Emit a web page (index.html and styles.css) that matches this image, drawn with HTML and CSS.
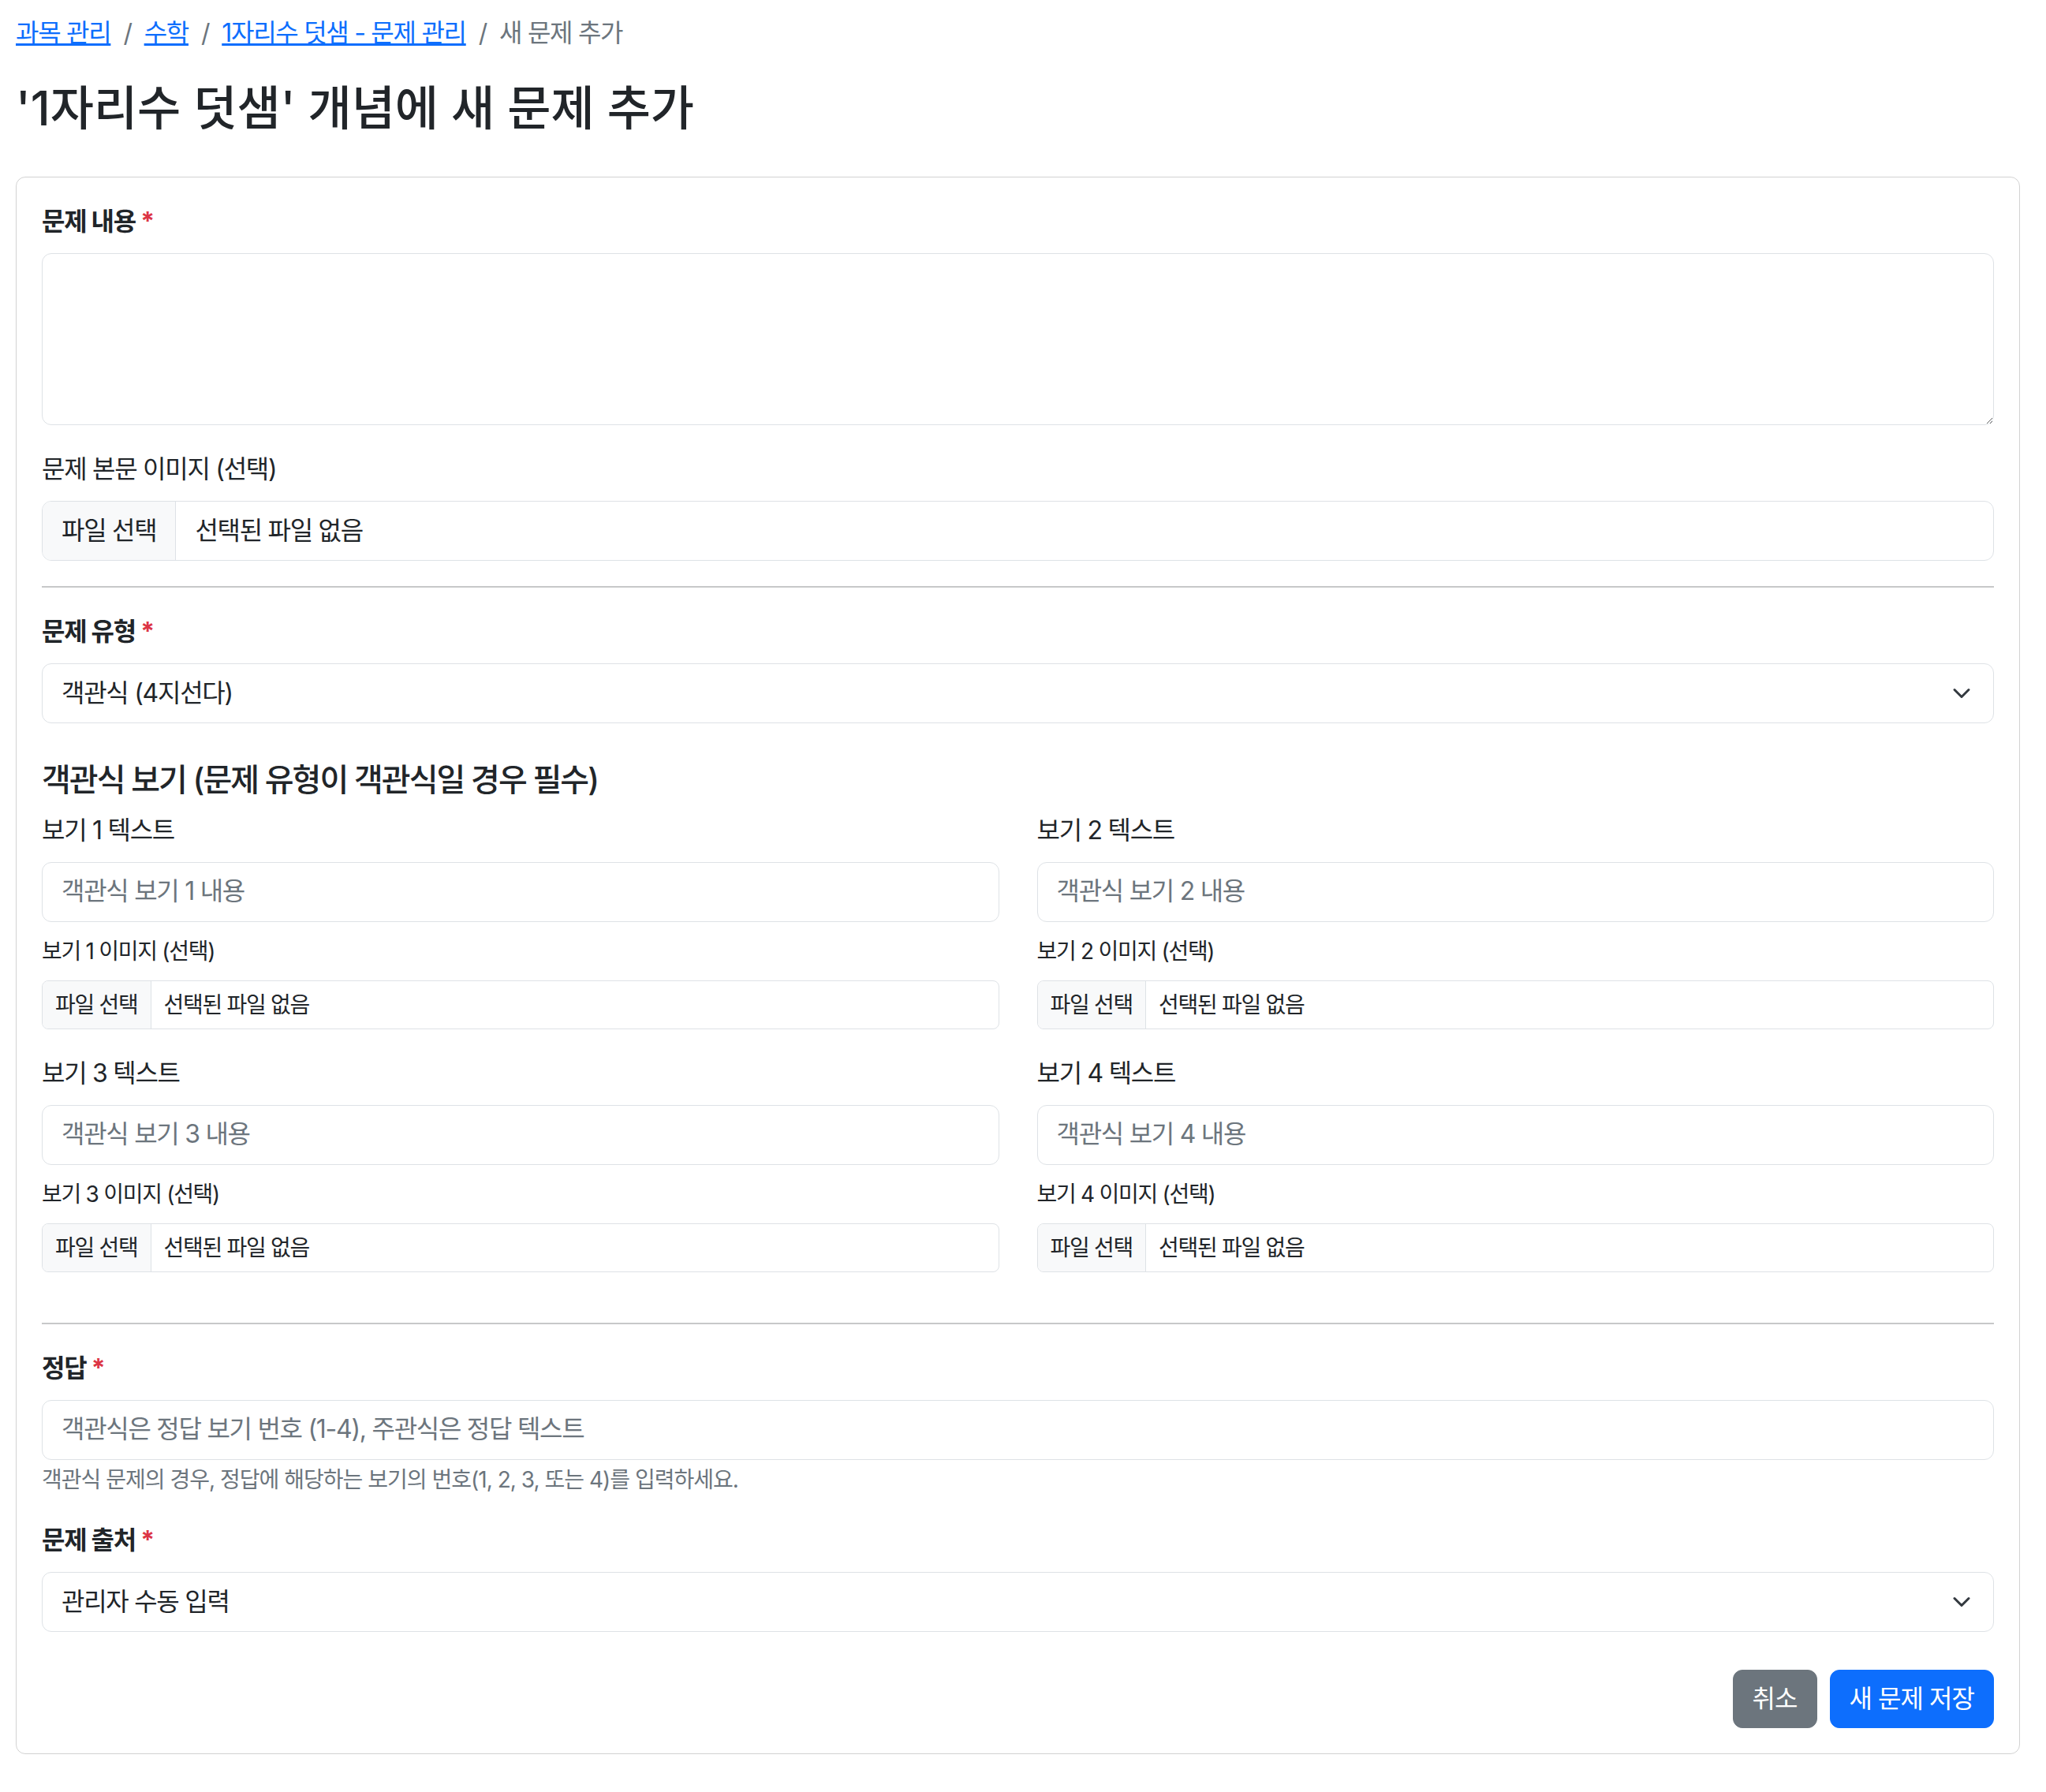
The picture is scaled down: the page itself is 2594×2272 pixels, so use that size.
FILE: index.html
```html
<!DOCTYPE html>
<html lang="ko">
<head>
<meta charset="utf-8">
<title>새 문제 추가</title>
<link rel="stylesheet" href="styles.css">
</head>
<body>
<main class="page">
  <nav class="crumbs" aria-label="breadcrumb">
    <ol class="crumb-list">
      <li class="crumb"><a href="#">과목 관리</a></li>
      <li class="crumb"><a href="#">수학</a></li>
      <li class="crumb"><a href="#">1자리수 덧샘 - 문제 관리</a></li>
      <li class="crumb active">새 문제 추가</li>
    </ol>
  </nav>

  <h1 class="title">'1자리수 덧샘' 개념에 새 문제 추가</h1>

  <form class="card">
    <div class="field">
      <label class="label strong">문제 내용 <span class="req">*</span></label>
      <textarea class="control area"></textarea>
    </div>

    <div class="field">
      <label class="label">문제 본문 이미지 (선택)</label>
      <div class="file"><span class="file-btn">파일 선택</span><span class="file-name">선택된 파일 없음</span></div>
    </div>

    <hr class="rule">

    <div class="field">
      <label class="label strong">문제 유형 <span class="req">*</span></label>
      <div class="control select"><span>객관식 (4지선다)</span><svg class="caret" viewBox="0 0 16 16" width="32" height="32"><path d="m2 5 6 6 6-6" fill="none" stroke="#343a40" stroke-width="2" stroke-linecap="round" stroke-linejoin="round"/></svg></div>
    </div>

    <h2 class="section">객관식 보기 (문제 유형이 객관식일 경우 필수)</h2>

    <div class="options">
      <div class="option">
        <label class="label">보기 1 텍스트</label>
        <div class="control input placeholder">객관식 보기 1 내용</div>
        <label class="label small">보기 1 이미지 (선택)</label>
        <div class="file sm"><span class="file-btn">파일 선택</span><span class="file-name">선택된 파일 없음</span></div>
      </div>
      <div class="option">
        <label class="label">보기 2 텍스트</label>
        <div class="control input placeholder">객관식 보기 2 내용</div>
        <label class="label small">보기 2 이미지 (선택)</label>
        <div class="file sm"><span class="file-btn">파일 선택</span><span class="file-name">선택된 파일 없음</span></div>
      </div>
      <div class="option">
        <label class="label">보기 3 텍스트</label>
        <div class="control input placeholder">객관식 보기 3 내용</div>
        <label class="label small">보기 3 이미지 (선택)</label>
        <div class="file sm"><span class="file-btn">파일 선택</span><span class="file-name">선택된 파일 없음</span></div>
      </div>
      <div class="option">
        <label class="label">보기 4 텍스트</label>
        <div class="control input placeholder">객관식 보기 4 내용</div>
        <label class="label small">보기 4 이미지 (선택)</label>
        <div class="file sm"><span class="file-btn">파일 선택</span><span class="file-name">선택된 파일 없음</span></div>
      </div>
    </div>

    <hr class="rule">

    <div class="field">
      <label class="label strong">정답 <span class="req">*</span></label>
      <div class="control input placeholder">객관식은 정답 보기 번호 (1-4), 주관식은 정답 텍스트</div>
      <div class="help">객관식 문제의 경우, 정답에 해당하는 보기의 번호(1, 2, 3, 또는 4)를 입력하세요.</div>
    </div>

    <div class="field">
      <label class="label strong">문제 출처 <span class="req">*</span></label>
      <div class="control select"><span>관리자 수동 입력</span><svg class="caret" viewBox="0 0 16 16" width="32" height="32"><path d="m2 5 6 6 6-6" fill="none" stroke="#343a40" stroke-width="2" stroke-linecap="round" stroke-linejoin="round"/></svg></div>
    </div>

    <div class="actions">
      <button type="button" class="btn btn-gray">취소</button>
      <button type="button" class="btn btn-blue">새 문제 저장</button>
    </div>
  </form>
</main>
</body>
</html>
```

FILE: styles.css
```css
:root {
  font-size: 32px;
}

* {
  box-sizing: border-box;
}

body {
  margin: 0;
  background: #fff;
  color: #212529;
  font-family: Inter, "Noto Sans CJK KR", sans-serif;
  font-size: 1rem;
  line-height: 1.5;
  letter-spacing: -0.04em;
}

.page {
  padding: 18px 33px 40px 20px;
}

/* breadcrumb */
.crumb-list {
  display: flex;
  flex-wrap: wrap;
  list-style: none;
  margin: 0 0 35px;
  padding: 0;
}

.crumb a {
  color: #0d6efd;
  text-decoration: underline;
}

.crumb + .crumb::before {
  content: "/";
  color: #6c757d;
  padding: 0 0.5rem;
}

.crumb.active {
  color: #6c757d;
}

/* title */
.title {
  margin: 0 0 51px;
  font-size: 60px;
  font-weight: 500;
  line-height: 1.2;
  letter-spacing: 0;
}

/* card */
.card {
  display: block;
  border: 1px solid rgba(0, 0, 0, 0.175);
  border-radius: 0.375rem;
  padding: 1rem;
}

.field {
  margin-bottom: 1rem;
}

.label {
  display: block;
  margin-bottom: 0.5rem;
}

.label.strong {
  font-weight: 700;
}

.label.small {
  font-size: 0.875rem;
}

.req {
  color: #dc3545;
}

.control {
  display: block;
  width: 100%;
  padding: 0.375rem 0.75rem;
  font: inherit;
  letter-spacing: inherit;
  color: #212529;
  background: #fff;
  border: 1px solid #dee2e6;
  border-radius: 0.375rem;
  min-height: 76px;
}

.area {
  height: 218px;
  resize: vertical;
}

.placeholder {
  color: #6c757d;
}

.select {
  display: flex;
  align-items: center;
  justify-content: space-between;
  padding-right: 0.75rem;
}

.caret {
  width: 32px;
  height: 24px;
  flex: none;
}

/* file inputs */
.file {
  display: flex;
  align-items: stretch;
  border: 1px solid #dee2e6;
  border-radius: 0.375rem;
  overflow: hidden;
  height: 76px;
}

.file-btn {
  display: flex;
  align-items: center;
  padding: 0 0.75rem;
  background: #f8f9fa;
  border-right: 1px solid #dee2e6;
}

.file-name {
  display: flex;
  align-items: center;
  padding: 0 0.75rem;
}

.file.sm {
  height: 62px;
  font-size: 0.875rem;
  border-radius: 0.25rem;
}

.file.sm .file-btn,
.file.sm .file-name {
  padding: 0 0.5rem;
}

.rule {
  margin: 1rem 0;
  border: 0;
  border-top: 2px solid #212529;
  opacity: 0.25;
}

.section {
  margin: 1.5rem 0 0.5rem;
  font-size: 1.25rem;
  font-weight: 500;
  line-height: 1.2;
  letter-spacing: -0.049em;
}

.options {
  display: grid;
  grid-template-columns: 1fr 1fr;
  column-gap: 1.5rem;
}

.option {
  margin-bottom: 1rem;
}

.option .input {
  margin-bottom: 0.5rem;
}

.help {
  margin-top: 4px;
  font-size: 0.875rem;
  color: #6c757d;
  letter-spacing: -0.035em;
}

.actions {
  display: flex;
  justify-content: flex-end;
  gap: 0.5rem;
  margin-top: 1.5rem;
}

.btn {
  font: inherit;
  letter-spacing: -0.03em;
  padding: 0.375rem 0.75rem;
  border: 1px solid transparent;
  border-radius: 0.375rem;
  color: #fff;
  cursor: pointer;
}

.btn-gray {
  background: #6c757d;
  border-color: #6c757d;
}

.btn-blue {
  background: #0d6efd;
  border-color: #0d6efd;
}
```
